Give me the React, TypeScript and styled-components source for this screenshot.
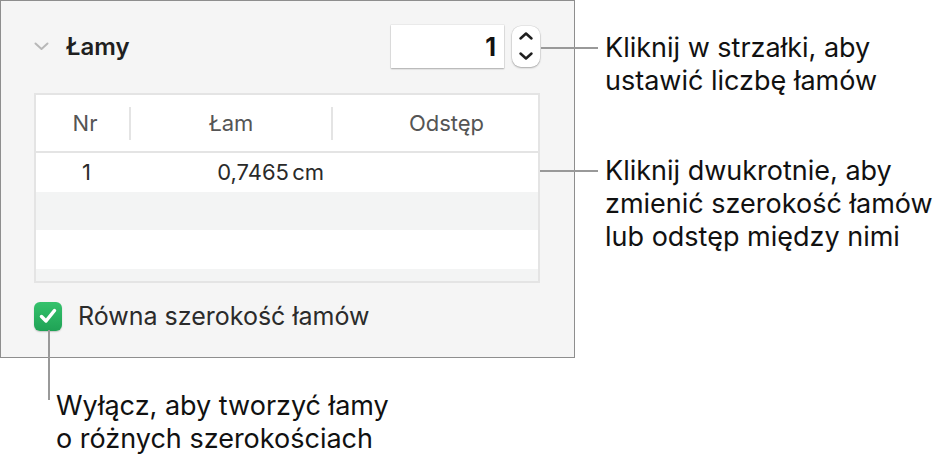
import styled, { createGlobalStyle } from "styled-components";

const GlobalStyle = createGlobalStyle`
  html, body {
    margin: 0;
    padding: 0;
    background: #ffffff;
  }
  body {
    font-family: Inter, "Noto Sans", sans-serif;
    color: #1d1d1f;
  }
`;

const Page = styled.div`
  width: 952px;
  height: 463px;
  display: grid;
  grid-template-columns: 575px 1fr;
  grid-template-rows: 358px 1fr;
  overflow: hidden;
`;

const Panel = styled.section`
  box-sizing: border-box;
  background: #f5f5f5;
  border: 1px solid #8e8e8e;
  padding: 24px 34px 0 33px;
  display: flex;
  flex-direction: column;
`;

const Header = styled.div`
  display: flex;
  align-items: center;
  height: 43px;
`;

const Title = styled.span`
  margin-left: 17px;
  font-size: 24px;
  font-weight: 600;
  color: #1f1f1f;
  flex: 1;
`;

const Field = styled.div`
  width: 113px;
  height: 43px;
  box-sizing: border-box;
  background: #fff;
  box-shadow: 0 0 0 0.5px rgba(0, 0, 0, 0.08), 0 1px 1.5px rgba(0, 0, 0, 0.28);
  display: flex;
  align-items: center;
  justify-content: flex-end;
  padding-right: 8px;
  font-size: 25px;
  font-weight: 700;
  color: #111;
`;

const Stepper = styled.div`
  width: 28px;
  height: 41px;
  margin-left: 8px;
  background: #fff;
  border-radius: 9px;
  box-shadow: 0 0 0 0.5px rgba(0, 0, 0, 0.1), 0 1px 2px rgba(0, 0, 0, 0.28);
  display: flex;
`;

const Table = styled.div`
  margin-top: 25px;
  height: 190px;
  box-sizing: border-box;
  border: 2px solid #e4e4e4;
  background: #fff;
  display: flex;
  flex-direction: column;
  overflow: hidden;
`;

const HeadRow = styled.div`
  display: flex;
  align-items: center;
  height: 56px;
  flex-shrink: 0;
  border-bottom: 2px solid #e4e4e4;
  font-size: 22px;
  color: #555;
`;

const Cell = styled.div<{ $w?: number; $align?: string; $pl?: number; $pr?: number }>`
  width: ${(p) => (p.$w ? `${p.$w}px` : "auto")};
  flex: ${(p) => (p.$w ? "none" : "1")};
  text-align: ${(p) => p.$align || "center"};
  padding-left: ${(p) => p.$pl || 0}px;
  padding-right: ${(p) => p.$pr || 0}px;
  box-sizing: border-box;
`;

const Sep = styled.div`
  width: 2px;
  height: 33px;
  background: #e4e4e4;
`;

const Row = styled.div<{ $alt?: boolean }>`
  display: flex;
  align-items: center;
  height: 38.5px;
  flex-shrink: 0;
  background: ${(p) => (p.$alt ? "#f3f4f4" : "#fff")};
  font-size: 22px;
  color: #2a2a2a;
`;

const Unit = styled.span`
  margin-left: -3px;
`;

const CheckRow = styled.label`
  margin-top: 18px;
  display: flex;
  align-items: center;
  gap: 16px;
  font-size: 25px;
  color: #2b2b2b;
`;

const Check = styled.span`
  width: 28px;
  height: 29px;
  border-radius: 6px;
  background: linear-gradient(#35c26c, #1fa255);
  box-shadow: 0 1px 1.5px rgba(0, 0, 0, 0.2);
  display: flex;
  align-items: center;
  justify-content: center;
`;

const Side = styled.div`
  padding: 31px 0 0 30px;
  display: flex;
  flex-direction: column;
`;

const Below = styled.div`
  grid-column: 1;
  padding: 31px 0 0 56px;
`;

const Callout = styled.p<{ $from: "left" | "up"; $len: number; $gap?: number }>`
  position: relative;
  margin: ${(p) => p.$gap || 0}px 0 0;
  font-size: 27px;
  line-height: 33px;
  color: #111;
  white-space: nowrap;

  &::before {
    content: "";
    position: absolute;
    background: #999;
    ${(p) =>
      p.$from === "left"
        ? `left: -${p.$len + 7}px; top: 16px; width: ${p.$len}px; height: 2px;`
        : `left: -8px; top: -${p.$len - 11}px; width: 2px; height: ${p.$len}px;`}
  }
`;

const App = () => (
  <>
    <GlobalStyle />
    <Page>
      <Panel>
        <Header>
          <svg width="15" height="9" viewBox="0 0 15 9">
            <path d="M1.5 1.5 L7.5 7 L13.5 1.5" fill="none" stroke="#b8b8b8" strokeWidth="2" strokeLinecap="round" strokeLinejoin="round" />
          </svg>
          <Title>Łamy</Title>
          <Field>1</Field>
          <Stepper>
            <svg width="28" height="41" viewBox="0 0 28 41">
              <path d="M8.5 12.5 L14 7.5 L19.5 12.5" fill="none" stroke="#1f1f1f" strokeWidth="2.5" strokeLinecap="round" strokeLinejoin="round" />
              <path d="M8.5 27.5 L14 32.5 L19.5 27.5" fill="none" stroke="#1f1f1f" strokeWidth="2.5" strokeLinecap="round" strokeLinejoin="round" />
            </svg>
          </Stepper>
        </Header>

        <Table>
          <HeadRow>
            <Cell $w={93} $pl={5}>Nr</Cell>
            <Sep />
            <Cell $w={200}>Łam</Cell>
            <Sep />
            <Cell $pl={22}>Odstęp</Cell>
          </HeadRow>
          <Row>
            <Cell $w={95} $pl={6}>1</Cell>
            <Cell $w={202} $align="right" $pr={9}>
              0,7465 <Unit>cm</Unit>
            </Cell>
            <Cell />
          </Row>
          <Row $alt />
          <Row />
          <Row $alt />
        </Table>

        <CheckRow>
          <Check>
            <svg width="18" height="16" viewBox="0 0 18 16">
              <path d="M2.5 8.5 L7 13 L15.5 2.5" fill="none" stroke="#fff" strokeWidth="3.5" strokeLinecap="round" strokeLinejoin="round" />
            </svg>
          </Check>
          Równa szerokość łamów
        </CheckRow>
      </Panel>

      <Side>
        <Callout $from="left" $len={57}>
          Kliknij w strzałki, aby
          <br />
          ustawić liczbę łamów
        </Callout>
        <Callout $from="left" $len={58} $gap={57}>
          Kliknij dwukrotnie, aby
          <br />
          zmienić szerokość łamów
          <br />
          lub odstęp między nimi
        </Callout>
      </Side>

      <Below>
        <Callout $from="up" $len={70}>
          Wyłącz, aby tworzyć łamy
          <br />o różnych szerokościach
        </Callout>
      </Below>
    </Page>
  </>
);

export default App;
